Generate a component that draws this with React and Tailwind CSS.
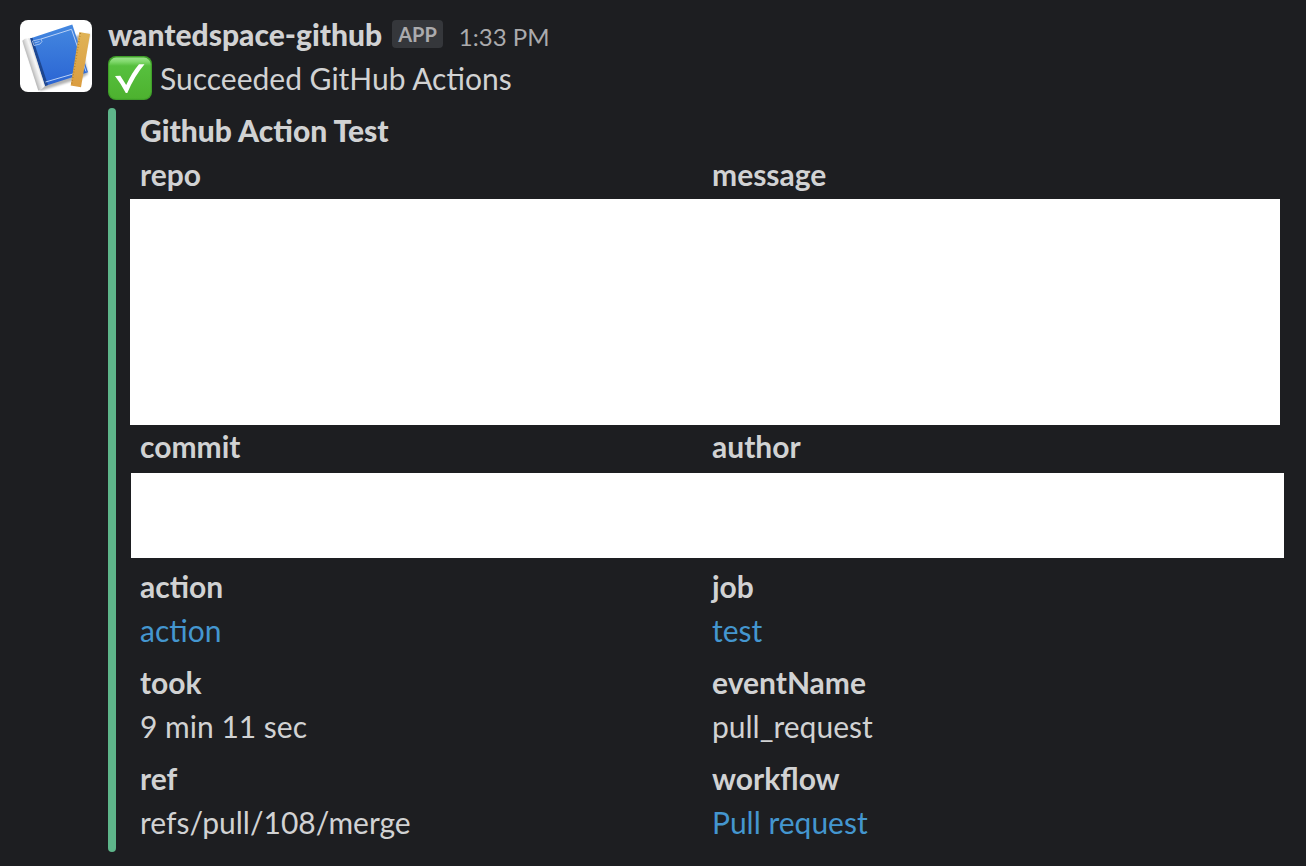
const rows = [
  [
    { label: 'action', value: 'action', href: '#action' },
    { label: 'job', value: 'test', href: '#job' },
  ],
  [
    { label: 'took', value: '9 min 11 sec' },
    { label: 'eventName', value: 'pull_request' },
  ],
  [
    { label: 'ref', value: 'refs/pull/108/merge' },
    { label: 'workflow', value: 'Pull request', href: '#workflow' },
  ],
];

const Avatar = () => (
  <svg viewBox="0 0 72 72" className="w-[72px] h-[72px] shrink-0 rounded-lg bg-white" aria-hidden="true">
    <defs>
      <linearGradient id="cover" x1="0" y1="0" x2="0" y2="1">
        <stop offset="0" stopColor="#4488e0" />
        <stop offset="1" stopColor="#2a64d3" />
      </linearGradient>
      <linearGradient id="roll" gradientUnits="userSpaceOnUse" x1="10" y1="46" x2="19" y2="43">
        <stop offset="0" stopColor="#b4b4b4" />
        <stop offset="0.3" stopColor="#d8d8d8" />
        <stop offset="0.65" stopColor="#f8f8f8" />
        <stop offset="1" stopColor="#d0d0d0" />
      </linearGradient>
      <linearGradient id="ruler" x1="0" y1="0" x2="0" y2="1">
        <stop offset="0" stopColor="#e0b356" />
        <stop offset="1" stopColor="#db9d40" />
      </linearGradient>
      <filter id="soft" x="-20%" y="-20%" width="140%" height="140%">
        <feGaussianBlur stdDeviation="1.2" />
      </filter>
    </defs>
    <path d="M4 23L20 71L62 58L68 54L64 36L70 14Z" fill="#000" opacity="0.3" filter="url(#soft)" />
    <path d="M10 18.500L52.300 4.500L68 52.300L25 66Z" fill="url(#cover)" />
    <path d="M10 18.500L12.500 17.700L28 65L25 66Z" fill="#1d4690" />
    <path d="M21 19L51.500 9.300L66 51.500M53 54L25.500 62" fill="none" stroke="#b9d1f6" strokeWidth="1" />
    <path d="M12.500 21l8.500-2l1 2.500l-2 2.500l-6 1.500zM14.500 23l5-1.500" fill="none" stroke="#b5cff5" strokeWidth="0.8" />
    <path d="M2.300 20.700Q5 17.800 10 18.500L25 66Q22.500 69.500 18.300 70.500Z" fill="url(#roll)" />
    <path d="M59.300 12L70 14L61 67.300L50.700 65.500Z" fill="url(#ruler)" />
    <path d="M60.300 13L51.600 65" fill="none" stroke="#b07c28" strokeWidth="1.400" strokeDasharray="0.8 2" />
  </svg>
);

const CheckEmoji = () => (
  <svg viewBox="0 0 44 44" className="w-11 h-11 shrink-0" role="img" aria-label="white check mark">
    <defs>
      <linearGradient id="green" x1="0" y1="0" x2="0" y2="1">
        <stop offset="0" stopColor="#9be38b" />
        <stop offset="0.1" stopColor="#7fd86b" />
        <stop offset="0.2" stopColor="#57c03e" />
        <stop offset="1" stopColor="#4db22f" />
      </linearGradient>
    </defs>
    <rect width="44" height="44" rx="8" fill="#3f9f29" />
    <rect x="1.200" y="1.600" width="41.600" height="41.200" rx="7" fill="url(#green)" />
    <path d="M7 20L12.300 19.700L18.200 29Q24 16.500 31 8.300L36.500 8.300Q26.500 20 19.300 37L17.800 37Q12.500 27 7 20Z" fill="#fff" />
  </svg>
);

const Field = ({ label, value, href }) => (
  <div>
    <dt className="font-bold">{label}</dt>
    {value && (
      <dd>
        {href ? <a href={href} className="text-[#4496cf] hover:underline">{value}</a> : value}
      </dd>
    )}
  </div>
);

const App = () => {
  return (
    <div className="min-h-screen bg-[#1d1e21] text-[#d1d2d3] font-['Lato',sans-serif] text-[30px] leading-[44px] pt-3 pr-[22px] pb-[14px] pl-5">
      <article className="flex gap-4">
        <div className="pt-2 shrink-0">
          <Avatar />
        </div>
        <div className="flex-1 min-w-0">
          <header className="flex items-baseline">
            <button type="button" className="font-black hover:underline">wantedspace-github</button>
            <span className="ml-[10px] px-[6px] h-7 rounded bg-[#35373b] text-[#ababad] text-xl leading-7 font-bold self-start mt-2">APP</span>
            <time className="ml-4 text-2xl leading-[44px] text-[#ababad]">1:33 PM</time>
          </header>

          <div className="flex items-center gap-2 -mt-[3px]">
            <CheckEmoji />
            <p>Succeeded GitHub Actions</p>
          </div>

          <section className="flex gap-6 mt-2">
            <div className="w-2 shrink-0 rounded-full bg-[#5eb58a]" />
            <div className="flex-1 min-w-0 pb-2">
              <h2 className="font-black">Github Action Test</h2>
              <dl className="grid grid-cols-2">
                <Field label="repo" />
                <Field label="message" />
              </dl>
              <div className="h-[226px] mt-[3px] -ml-[10px] mr-1 bg-white" />
              <dl className="grid grid-cols-2 -mt-px">
                <Field label="commit" />
                <Field label="author" />
              </dl>
              <div className="h-[85px] mt-[5px] -ml-[9px] bg-white" />
              <dl className="grid grid-cols-2 gap-y-2 mt-[6px]">
                {rows.flat().map(f => (
                  <Field key={f.label} {...f} />
                ))}
              </dl>
            </div>
          </section>
        </div>
      </article>
    </div>
  );
};

export default App;
